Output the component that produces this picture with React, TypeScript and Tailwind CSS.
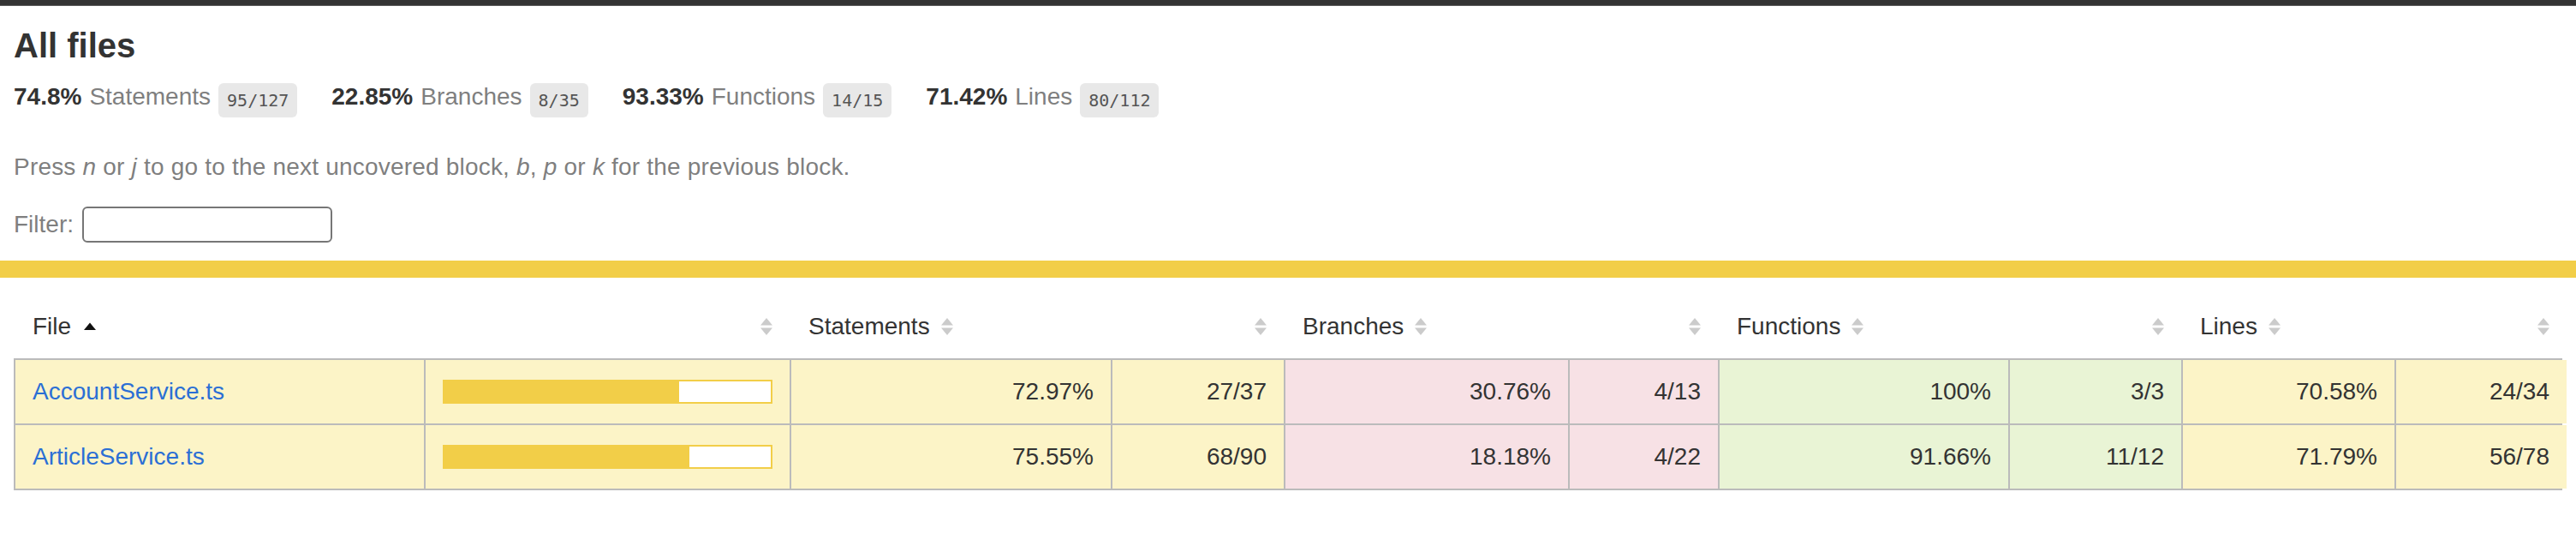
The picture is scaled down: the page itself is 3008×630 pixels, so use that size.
import React from 'react';

type Metric = { pct: number; label: string; raw: string };

type FileRow = {
  name: string;
  statements: Metric;
  branches: Metric;
  functions: Metric;
  lines: Metric;
};

const files: FileRow[] = [
  {
    name: 'AccountService.ts',
    statements: { pct: 72.97, label: '72.97%', raw: '27/37' },
    branches: { pct: 30.76, label: '30.76%', raw: '4/13' },
    functions: { pct: 100, label: '100%', raw: '3/3' },
    lines: { pct: 70.58, label: '70.58%', raw: '24/34' },
  },
  {
    name: 'ArticleService.ts',
    statements: { pct: 75.55, label: '75.55%', raw: '68/90' },
    branches: { pct: 18.18, label: '18.18%', raw: '4/22' },
    functions: { pct: 91.66, label: '91.66%', raw: '11/12' },
    lines: { pct: 71.79, label: '71.79%', raw: '56/78' },
  },
];

const summary = [
  { pct: '74.8%', name: 'Statements', raw: '95/127' },
  { pct: '22.85%', name: 'Branches', raw: '8/35' },
  { pct: '93.33%', name: 'Functions', raw: '14/15' },
  { pct: '71.42%', name: 'Lines', raw: '80/112' },
];

const levelBg = (pct: number) => {
  if (pct >= 80) return 'bg-[#e9f4d5]';
  if (pct >= 50) return 'bg-[#fcf4c7]';
  return 'bg-[#f7e1e5]';
};

const cols =
  'grid grid-cols-[477px_425px_373px_200px_330px_173px_337px_200px_247px_199px] gap-x-[2px]';

const Sorter: React.FC = () => (
  <svg width="14" height="20" viewBox="0 0 14 20" className="shrink-0">
    <polygon points="7,0 14,8.5 0,8.5" fill="#cbcbcb" />
    <polygon points="0,11.5 14,11.5 7,20" fill="#cbcbcb" />
  </svg>
);

const SortedUp: React.FC = () => (
  <svg width="14" height="20" viewBox="0 0 14 20" className="shrink-0">
    <polygon points="7,5.5 14,14 0,14" fill="#111" />
  </svg>
);

const HeadCell: React.FC<{ label?: string }> = ({ label }) =>
  label ? (
    <div className="flex items-center px-[20px] leading-[32px]">
      <span>{label}</span>
      <span className="ml-[13px] flex">
        <Sorter />
      </span>
    </div>
  ) : (
    <div className="flex items-center justify-end px-[20px] leading-[32px]">
      <Sorter />
    </div>
  );

const NumCell: React.FC<{ bg: string; children: React.ReactNode }> = ({ bg, children }) => (
  <div className={`${bg} pt-[21px] pb-[21px] pr-[20px] text-right leading-[32px]`}>{children}</div>
);

const App: React.FC = () => {
  return (
    <div className="min-h-screen bg-white font-['Liberation_Sans',Arial,sans-serif] text-[28px] text-[#333]">
      <div className="h-[7px] border-b border-[#5a5a5a] bg-[#333]" />

      <div className="px-[16px]">
        <h1 className="mt-[23px] text-[40px] font-bold leading-[46px]">All files</h1>

        <div className="mt-[21px] flex items-start">
          {summary.map((s) => (
            <div key={s.name} className="mr-[40px] flex items-start gap-x-[9px]">
              <span className="font-bold leading-[32px]">{s.pct}</span>
              <span className="leading-[32px] text-[#7f7f7f]">{s.name}</span>
              <span className="h-[40px] rounded-[6px] bg-[#e8e8e8] px-[10px] font-['DejaVu_Sans_Mono','Liberation_Mono',monospace] text-[20px] leading-[40px] text-[#555]">
                {s.raw}
              </span>
            </div>
          ))}
        </div>

        <p className="mt-[42px] leading-[32px] tracking-[0.2px] text-[#7f7f7f]">
          Press <em>n</em> or <em>j</em> to go to the next uncovered block, <em>b</em>, <em>p</em> or{' '}
          <em>k</em> for the previous block.
        </p>

        <div className="mt-[30px] flex items-center">
          <span className="leading-[32px] text-[#7f7f7f]">Filter:</span>
          <input
            type="search"
            className="ml-[10px] h-[42px] w-[292px] rounded-[6px] border-2 border-[#767676] bg-white px-[6px] text-[26px] outline-none"
          />
        </div>
      </div>

      <div className="mt-[21px] h-[20px] bg-[#f2ce48]" />

      <div className="px-[16px]">
        <div className={`${cols} pl-[2px] pt-[41px] pb-[21px]`}>
          <div className="flex items-center px-[20px] leading-[32px]">
            <span>File</span>
            <span className="ml-[15px] flex">
              <SortedUp />
            </span>
          </div>
          <HeadCell />
          <HeadCell label="Statements" />
          <HeadCell />
          <HeadCell label="Branches" />
          <HeadCell />
          <HeadCell label="Functions" />
          <HeadCell />
          <HeadCell label="Lines" />
          <HeadCell />
        </div>

        <div className={`${cols} gap-y-[2px] bg-[#bbbbbb] p-[2px]`}>
          {files.map((f) => {
            const fileBg = levelBg(f.statements.pct);
            return (
              <React.Fragment key={f.name}>
                <div className={`${fileBg} pt-[21px] pb-[21px] pl-[20px] leading-[32px]`}>
                  <a href="#" className="text-[#2b6fd5]">
                    {f.name}
                  </a>
                </div>
                <div className={`${fileBg} flex items-center px-[20px]`}>
                  <div className="h-[28px] w-full border-2 border-[#f2ce48] bg-white">
                    <div
                      className="h-full bg-[#f2ce48]"
                      style={{ width: `${Math.floor(f.statements.pct)}%` }}
                    />
                  </div>
                </div>
                <NumCell bg={levelBg(f.statements.pct)}>{f.statements.label}</NumCell>
                <NumCell bg={levelBg(f.statements.pct)}>{f.statements.raw}</NumCell>
                <NumCell bg={levelBg(f.branches.pct)}>{f.branches.label}</NumCell>
                <NumCell bg={levelBg(f.branches.pct)}>{f.branches.raw}</NumCell>
                <NumCell bg={levelBg(f.functions.pct)}>{f.functions.label}</NumCell>
                <NumCell bg={levelBg(f.functions.pct)}>{f.functions.raw}</NumCell>
                <NumCell bg={levelBg(f.lines.pct)}>{f.lines.label}</NumCell>
                <NumCell bg={levelBg(f.lines.pct)}>{f.lines.raw}</NumCell>
              </React.Fragment>
            );
          })}
        </div>
      </div>
    </div>
  );
};

export default App;
